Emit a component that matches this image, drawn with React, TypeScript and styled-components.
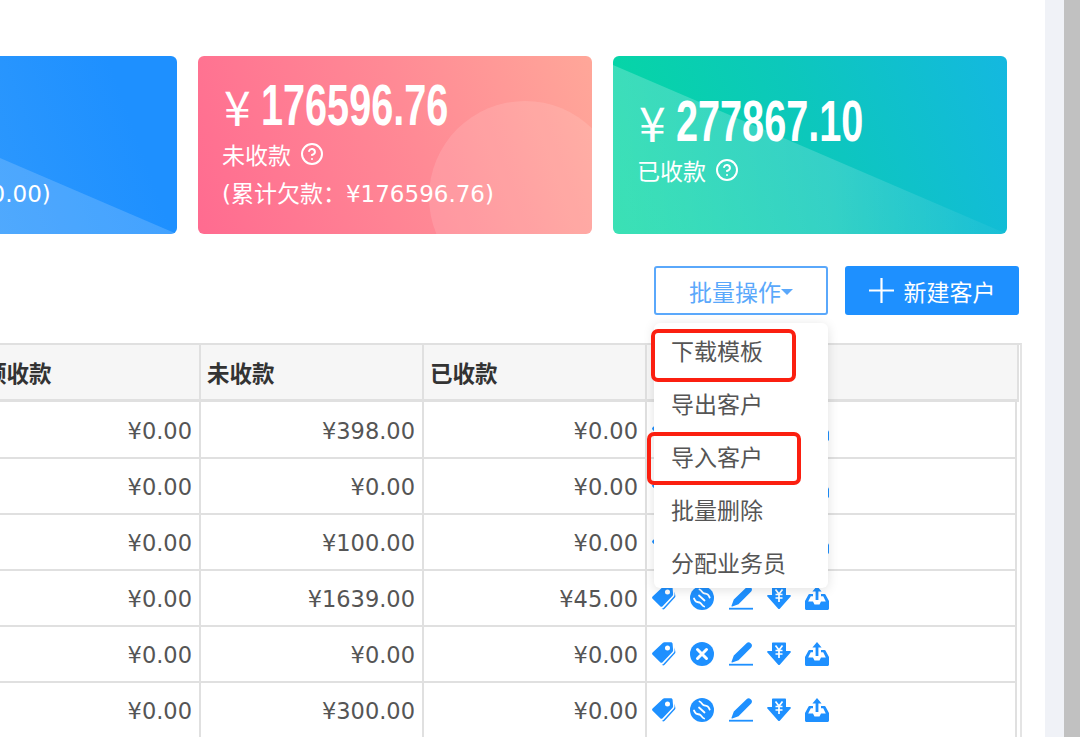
import styled, { createGlobalStyle } from 'styled-components'
import { CircleHelp } from 'lucide-react'

const GlobalStyle = createGlobalStyle`
  html, body {
    margin: 0;
    height: 737px;
    overflow: hidden;
    background: #fff;
    font-family: "DejaVu Sans", "Noto Sans CJK SC", sans-serif;
  }
`

const Page = styled.div`
  display: flex;
  width: 1080px;
  height: 737px;
  overflow: hidden;
`

const Main = styled.div`
  width: 1045px;
  flex-shrink: 0;
  padding-top: 56px;
  overflow: hidden;
`

const Gutter = styled.div`
  width: 19px;
  background: #f0f2f7;
`

const Scrollbar = styled.div`
  width: 16px;
  background: #c1c1c1;
`

const Cards = styled.div`
  display: flex;
  gap: 21px;
  margin-left: -217px;
`

const tones = {
  blue: 'linear-gradient(70deg, #3fa2fb 0%, #1e90ff 85%)',
  pink: 'linear-gradient(70deg, #ff6b90 0%, #ff8a95 55%, #ffa799 100%)',
  teal: 'linear-gradient(70deg, #04d9a0 0%, #0cc8bb 50%, #14b8e0 100%)',
}

const Card = styled.div<{ $tone: keyof typeof tones; $pad: number }>`
  position: relative;
  width: 394px;
  height: 178px;
  flex-shrink: 0;
  box-sizing: border-box;
  padding: ${(p) => p.$pad}px 0 0 24px;
  border-radius: 6px;
  overflow: hidden;
  color: #fff;
  background: ${(p) => tones[p.$tone]};
`

const Wedge = styled.div<{ $fade?: boolean }>`
  position: absolute;
  inset: 0;
  background: ${(p) =>
    p.$fade
      ? 'linear-gradient(90deg, rgba(255,255,255,.22), rgba(255,255,255,.17) 55%, rgba(255,255,255,.03))'
      : 'rgba(255, 255, 255, 0.17)'};
  clip-path: polygon(0 5%, 100% 100%, 0 100%);
`

const Bubble = styled.div`
  position: absolute;
  left: 231px;
  top: 45px;
  width: 192px;
  height: 192px;
  border-radius: 50%;
  background: rgba(255, 255, 255, 0.12);
`

const Amount = styled.div`
  position: relative;
  display: flex;
  align-items: center;
  height: 64px;
`

const Yen = styled.span`
  width: 37px;
  margin-left: 2px;
  flex-shrink: 0;
  font-family: "Noto Sans CJK SC", sans-serif;
  font-size: 48px;
  line-height: 1;
`

const Digits = styled.span`
  display: inline-block;
  font-family: "Liberation Sans", sans-serif;
  font-size: 57px;
  font-weight: 700;
  line-height: 1;
  transform: scaleX(0.695);
  transform-origin: left center;
  white-space: nowrap;
`

const Label = styled.div`
  position: relative;
  display: flex;
  align-items: center;
  gap: 9px;
  height: 38px;
  margin-top: -2px;
  margin-bottom: 2px;
  font-family: "Noto Sans CJK SC", sans-serif;
  font-size: 23px;
`

const Sub = styled.div`
  position: relative;
  height: 38px;
  line-height: 38px;
  font-size: 23px;
  white-space: pre;
`

const Toolbar = styled.div`
  display: flex;
  justify-content: flex-end;
  gap: 17px;
  margin-top: 32px;
  padding-right: 26px;
`

const MenuAnchor = styled.div`
  position: relative;
  z-index: 2;
`

const Button = styled.div<{ $primary?: boolean }>`
  display: flex;
  align-items: center;
  justify-content: center;
  box-sizing: border-box;
  width: 174px;
  height: 49px;
  border-radius: 3px;
  border: 2px solid ${(p) => (p.$primary ? '#1e90ff' : '#5aa8fb')};
  background: ${(p) => (p.$primary ? '#1e90ff' : '#fff')};
  color: ${(p) => (p.$primary ? '#fff' : '#5aa8fb')};
  font-family: "Noto Sans CJK SC", sans-serif;
  font-size: 23px;
  gap: ${(p) => (p.$primary ? '10px' : '0')};
`

const Caret = styled.span`
  width: 0;
  height: 0;
  margin-top: 3px;
  border-left: 6px solid transparent;
  border-right: 6px solid transparent;
  border-top: 6px solid #5aa8fb;
`

const PlusMark = styled.svg`
  width: 25px;
  height: 25px;
  stroke: #fff;
  stroke-width: 2.2;
`

const Dropdown = styled.div`
  position: absolute;
  top: 57px;
  left: 0;
  width: 174px;
  height: 265px;
  padding-top: 1px;
  box-sizing: border-box;
  background: #fff;
  border-radius: 6px;
  box-shadow: 0 2px 12px rgba(0, 0, 0, 0.12);
`

const DropdownItem = styled.div`
  height: 53px;
  line-height: 53px;
  padding-left: 17px;
  color: #555;
  font-family: "Noto Sans CJK SC", sans-serif;
  font-size: 23px;
`

const Callout = styled.div<{ $left: number; $top: number; $width: number }>`
  position: absolute;
  left: ${(p) => p.$left}px;
  top: ${(p) => p.$top}px;
  width: ${(p) => p.$width}px;
  height: 53px;
  box-sizing: border-box;
  border: 4.5px solid #fb1f10;
  border-radius: 7px;
`

const Table = styled.div`
  margin: 28px 0 0 -22px;
  width: 1044px;
  box-sizing: border-box;
  border-top: 2px solid #e0e0e0;
  border-right: 2px solid #e4e4e4;
  padding-right: 3px;
`

const columns = '223px 223px 223px 1fr'

const HeadRow = styled.div`
  display: grid;
  grid-template-columns: ${columns};
  height: 57px;
  box-sizing: border-box;
  background: #f6f6f6;
  border-bottom: 3px solid #e0e0e0;
  margin-right: -2px;
`

const HeadCell = styled.div`
  display: flex;
  align-items: center;
  padding-left: 6px;
  box-sizing: border-box;
  border-right: 2px solid #e0e0e0;
  color: #333;
  font-family: "Noto Sans CJK SC", sans-serif;
  font-size: 22.5px;
  font-weight: 700;
`

const Row = styled.div<{ $tall?: boolean }>`
  display: grid;
  grid-template-columns: ${columns};
  height: ${(p) => (p.$tall ? '57px' : '56px')};
  box-sizing: border-box;
  border-bottom: 2px solid #e0e0e0;
`

const Cell = styled.div`
  display: flex;
  align-items: center;
  justify-content: flex-end;
  padding: 2px 7px 0 0;
  box-sizing: border-box;
  border-right: 2px solid #e0e0e0;
  color: #555;
  font-size: 22.5px;
`

const ActionCell = styled.div`
  display: flex;
  align-items: center;
  gap: 14.25px;
  padding: 0 0 1px 5px;
  box-sizing: border-box;
  border-right: 2px solid #e0e0e0;
`

const Icon = styled.svg`
  width: 24px;
  height: 24px;
  flex-shrink: 0;
  fill: #1e90ff;
`

const TagIcon = () => (
  <Icon viewBox="0 0 24 24">
    <path
      fillRule="evenodd"
      d="M.6 10.500 11 .8c.4-.4.9-.6 1.400-.6h6.400c1 0 1.700.7 1.800 1.600l.5 6.500c0 .5-.2 1-.5 1.400L10.600 20.200c-.7.7-1.700.7-2.400 0L.6 12.800c-.7-.6-.7-1.700 0-2.300ZM15.500 3.400a2.500 2.500 0 1 0 0 5 2.500 2.500 0 0 0 0-5Z"
    />
    <path d="M22.600 5.500 23.400 10c.1.6-.1 1-.5 1.400L12.400 23c-.6.6-1.500.6-2.200.1l-.6-.5c.6.1 1.200-.1 1.700-.6L21.900 10.400c.4-.5.6-1 .6-1.600l.1-3.300Z" />
  </Icon>
)

const BanIcon = () => (
  <Icon viewBox="0 0 24 24">
    <circle cx="12" cy="12" r="12" />
    <g fill="none" stroke="#fff" strokeWidth="1.800" strokeLinecap="round">
      <path d="M9.500 3.500c2 .5 2.300 2.600 3.800 3.500s3 .5 4.400 1.500 1.500 2 2 3" />
      <path d="M4 12.500c.5 1 .6 2 2 3s3 .5 4.400 1.500 1.800 3 3.800 3.500" />
      <path d="M9 9.500 14.500 14.500" />
    </g>
  </Icon>
)

const CloseIcon = () => (
  <Icon viewBox="0 0 24 24">
    <circle cx="12" cy="12" r="12" />
    <path d="M7.500 7.500 16.500 16.500M16.500 7.500 7.500 16.500" fill="none" stroke="#fff" strokeWidth="3" strokeLinecap="round" />
  </Icon>
)

const PenIcon = () => (
  <Icon viewBox="0 0 24 24">
    <path d="M17.800 1c1-1 2.600-1 3.600 0l.8.8c1 1 1 2.600 0 3.600L9.500 18.200 3.300 20.500c-.6.200-1-.3-.8-.8L4.800 13.600 17.800 1Z" />
    <rect x="0" y="21.800" width="24" height="1.800" />
  </Icon>
)

const YenArrowIcon = () => (
  <Icon viewBox="0 0 24 24">
    <path d="M6 .5h12c.6 0 1 .4 1 1V9h4c.8 0 1.200 1 .6 1.600L12.800 22.700c-.4.4-1.200.4-1.600 0L.4 10.600C-.2 10 .2 9 1 9h4V1.500c0-.6.4-1 1-1Z" />
    <path d="M8.500 3.500 12 8l3.500-4.500M12 8v8M8.500 8.500h7M8.500 12h7" fill="none" stroke="#fff" strokeWidth="1.700" />
  </Icon>
)

const TrayIcon = () => (
  <Icon viewBox="0 0 24 24">
    <path d="M4.500 8H8v2.200H5.800L3.200 15.500h4.800l1.500 3h5l1.500-3h4.800l-2.600-5.300H16V8h3.500c.5 0 .9.3 1.100.7L24 15v7.500c0 .8-.7 1.500-1.500 1.500h-21C.7 24 0 23.300 0 22.500V15l3.400-6.300c.2-.4.600-.7 1.100-.7Z" />
    <path d="M12 0l4.600 5.400h-3.200V14h-2.800V5.400H7.400L12 0Z" />
  </Icon>
)

const rows = [
  { unpaid: '¥398.00', paid: '¥0.00', banned: true },
  { unpaid: '¥0.00', paid: '¥0.00', banned: true },
  { unpaid: '¥100.00', paid: '¥0.00', banned: true },
  { unpaid: '¥1639.00', paid: '¥45.00', banned: true },
  { unpaid: '¥0.00', paid: '¥0.00', banned: false },
  { unpaid: '¥300.00', paid: '¥0.00', banned: true },
]

const menuItems = ['下载模板', '导出客户', '导入客户', '批量删除', '分配业务员']

export default function App() {
  return (
    <Page>
      <GlobalStyle />
      <Main>
        <Cards>
          <Card $tone="blue" $pad={17}>
            <Wedge />
            <Amount>
              <Yen>¥</Yen>
              <Digits>0.00</Digits>
            </Amount>
            <Label>预收款</Label>
            <Sub>(累计预收款： ¥10.00)</Sub>
          </Card>
          <Card $tone="pink" $pad={17}>
            <Bubble />
            <Amount>
              <Yen>¥</Yen>
              <Digits>176596.76</Digits>
            </Amount>
            <Label>
              未收款 <CircleHelp size={24} strokeWidth={2} />
            </Label>
            <Sub>(累计欠款：¥176596.76)</Sub>
          </Card>
          <Card $tone="teal" $pad={33}>
            <Wedge $fade />
            <Amount>
              <Yen>¥</Yen>
              <Digits>277867.10</Digits>
            </Amount>
            <Label>
              已收款 <CircleHelp size={24} strokeWidth={2} />
            </Label>
          </Card>
        </Cards>

        <Toolbar>
          <MenuAnchor>
            <Button>
              批量操作
              <Caret />
            </Button>
            <Dropdown>
              {menuItems.map((item) => (
                <DropdownItem key={item}>{item}</DropdownItem>
              ))}
            </Dropdown>
            <Callout $left={-3} $top={63} $width={145} />
            <Callout $left={-7} $top={166} $width={154} />
          </MenuAnchor>
          <Button $primary>
            <PlusMark viewBox="0 0 25 25">
              <path d="M0 12.500h25M12.500 0v25" />
            </PlusMark>
            新建客户
          </Button>
        </Toolbar>

        <Table>
          <HeadRow>
            <HeadCell>预收款</HeadCell>
            <HeadCell>未收款</HeadCell>
            <HeadCell>已收款</HeadCell>
            <HeadCell />
          </HeadRow>
          {rows.map((row, i) => (
            <Row key={i} $tall={i === 0}>
              <Cell>¥0.00</Cell>
              <Cell>{row.unpaid}</Cell>
              <Cell>{row.paid}</Cell>
              <ActionCell>
                <TagIcon />
                {row.banned ? <BanIcon /> : <CloseIcon />}
                <PenIcon />
                <YenArrowIcon />
                <TrayIcon />
              </ActionCell>
            </Row>
          ))}
        </Table>
      </Main>
      <Gutter />
      <Scrollbar />
    </Page>
  )
}
